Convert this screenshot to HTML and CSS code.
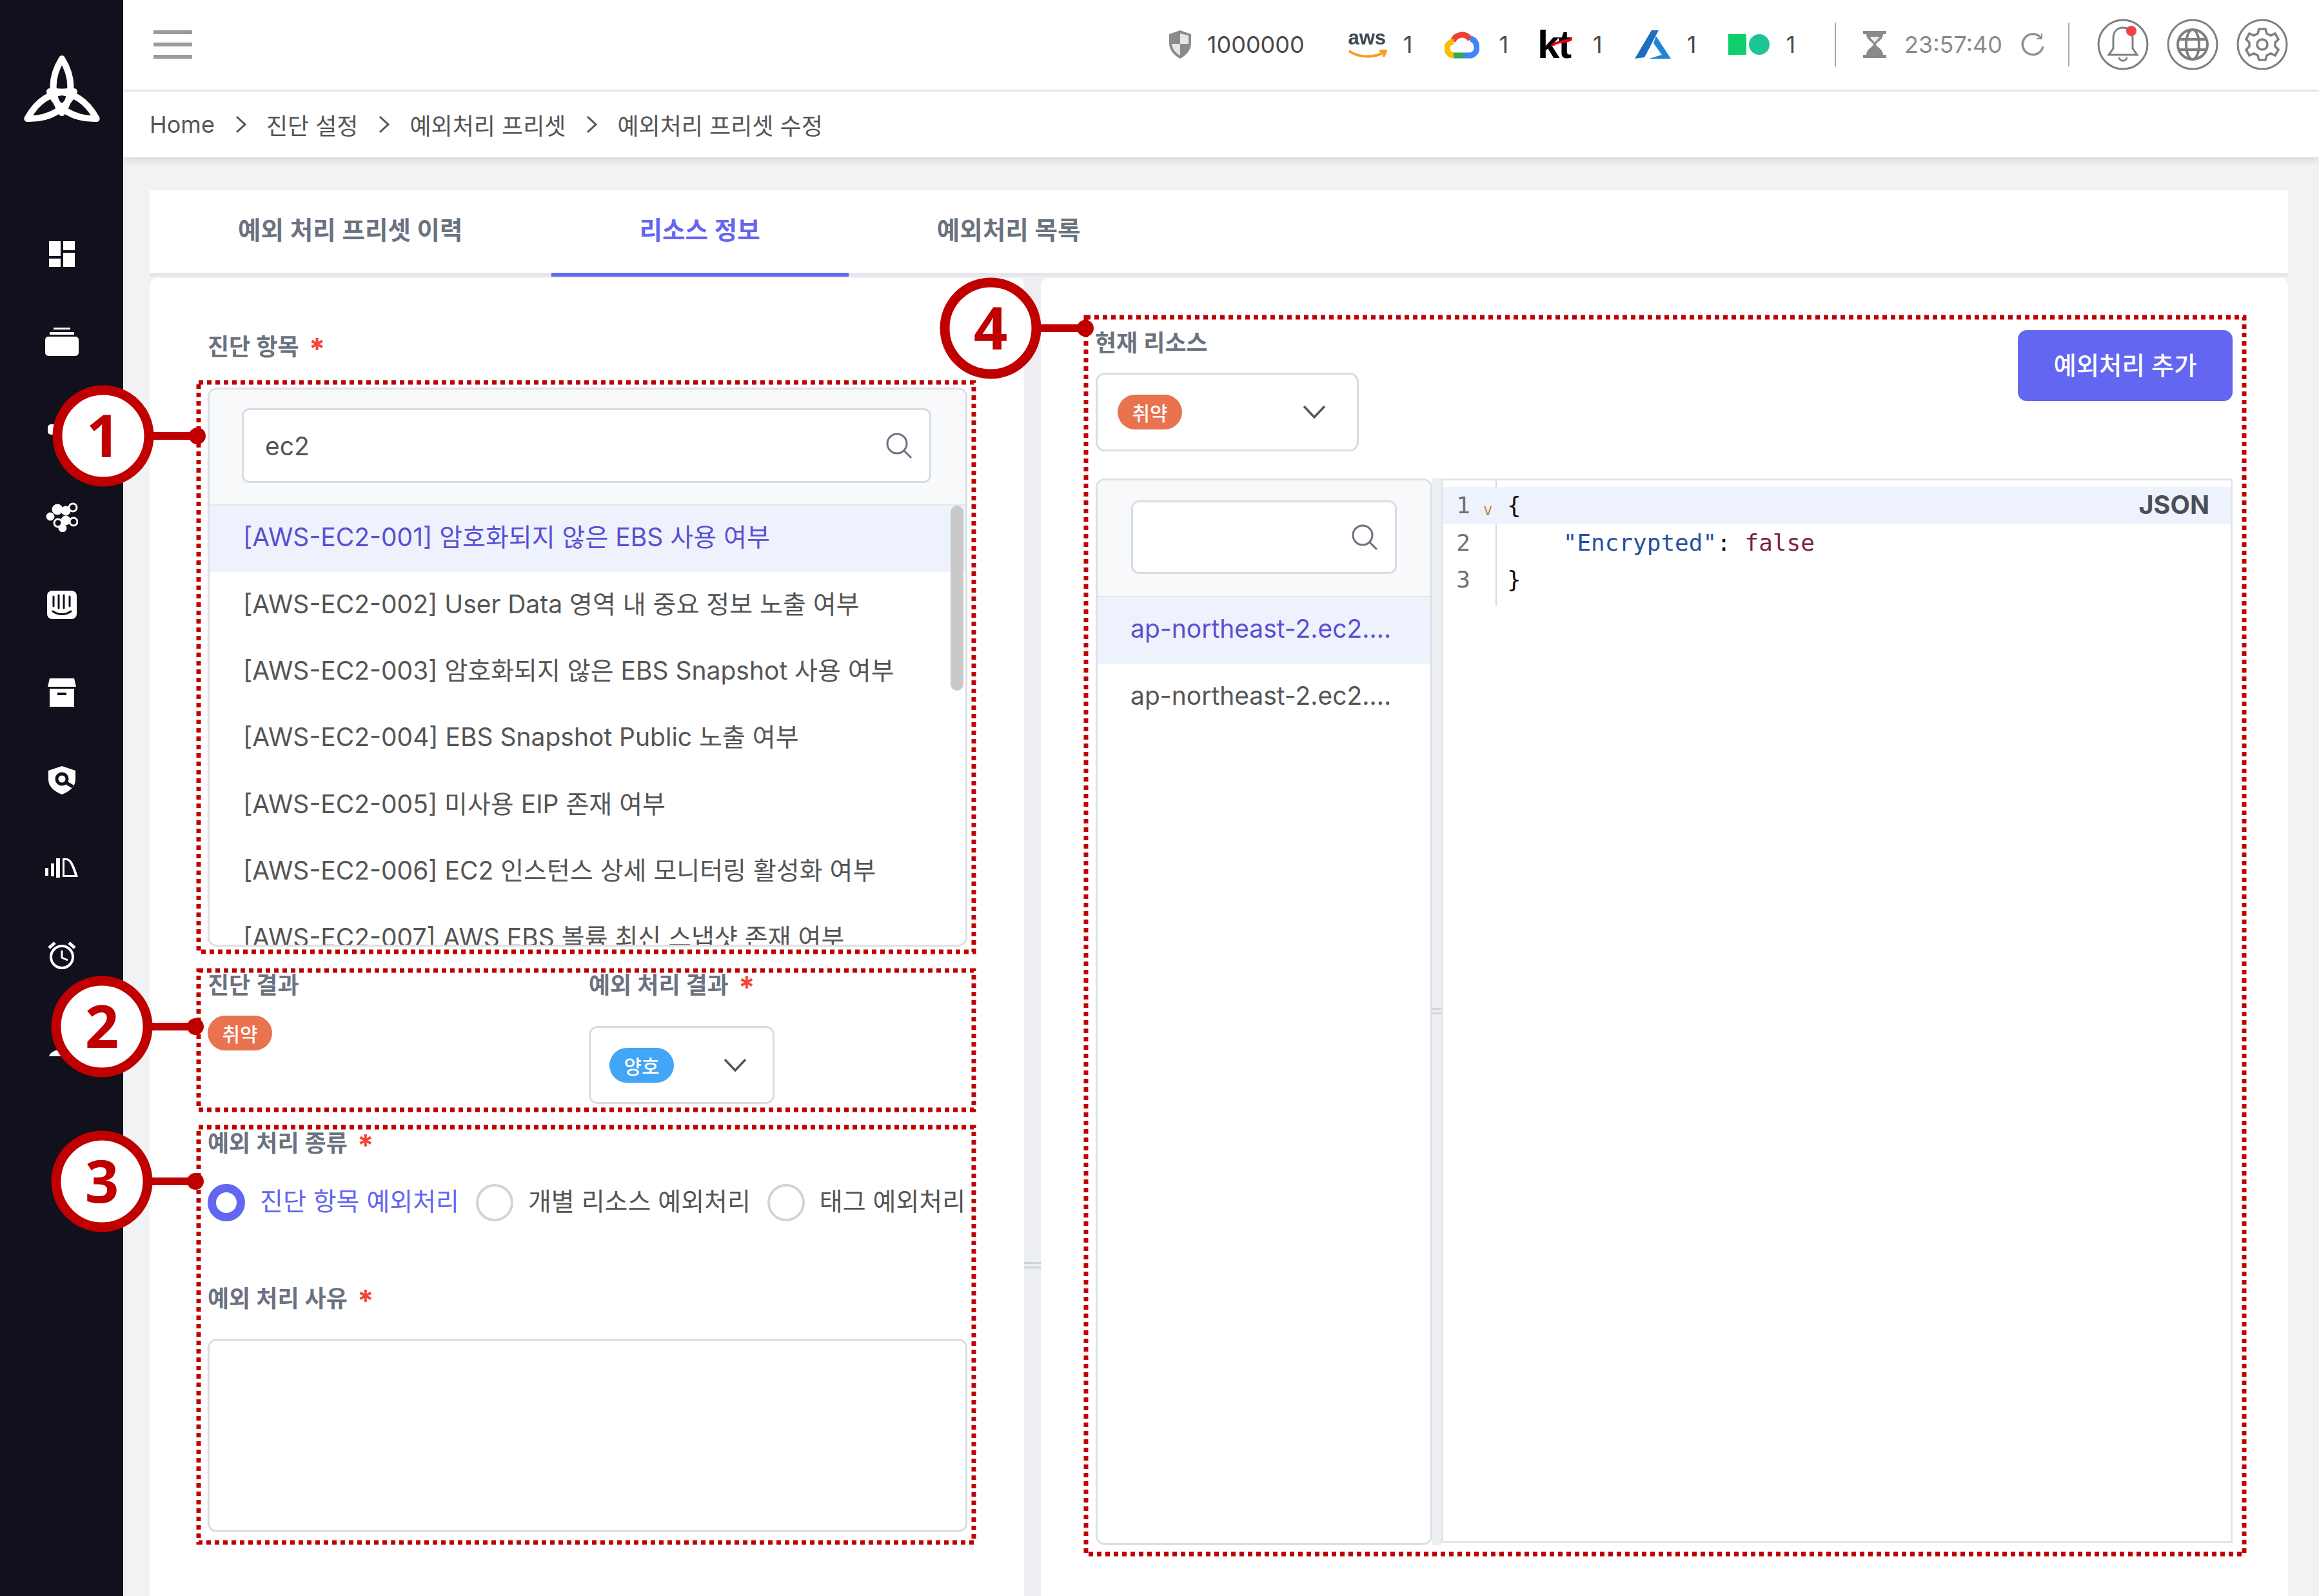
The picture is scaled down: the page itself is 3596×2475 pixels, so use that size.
FILE: index.html
```
<!DOCTYPE html>
<html lang="ko">
<head>
<meta charset="utf-8">
<title>예외처리 프리셋 수정</title>
<link rel="stylesheet" href="styles.css">
</head>
<body>
<div class="app">
  <aside class="sidebar">
    <div class="logo">
      <svg width="130" height="120" viewBox="-65 -68 130 120"><g fill="none" stroke="#fff" stroke-width="10" stroke-linejoin="round"><path d="M0-62C16-36 20-8 0 22C-20-8-16-36 0-62Z"/><path d="M0-62C16-36 20-8 0 22C-20-8-16-36 0-62Z" transform="rotate(120)"/><path d="M0-62C16-36 20-8 0 22C-20-8-16-36 0-62Z" transform="rotate(240)"/></g></svg>
    </div>
    <nav class="side-nav">
      <div class="side-item"><svg width="40" height="40" viewBox="0 0 40 40" fill="#fff"><rect x="0" y="0" width="18" height="23"/><rect x="22" y="0" width="18" height="14"/><rect x="0" y="27" width="18" height="13"/><rect x="22" y="18" width="18" height="22"/></svg></div>
      <div class="side-item"><svg width="52" height="44" viewBox="0 0 52 44" fill="#fff"><rect x="13" y="0" width="26" height="3"/><rect x="7" y="7" width="38" height="4"/><rect x="0" y="14" width="52" height="30" rx="5"/></svg></div>
      <div class="side-item"><svg width="44" height="44" viewBox="0 0 44 44" fill="#fff"><rect x="0" y="14" width="44" height="16" rx="5"/></svg></div>
      <div class="side-item"><svg width="50" height="46" viewBox="0 0 50 46" fill="#fff" stroke="#fff"><circle cx="7" cy="22" r="6"/><circle cx="18" cy="11" r="8"/><circle cx="31" cy="13" r="7"/><circle cx="19" cy="32" r="6" fill="none" stroke-width="3"/><circle cx="42" cy="8" r="6" fill="none" stroke-width="3"/><circle cx="31" cy="28" r="7"/><circle cx="43" cy="30" r="6" fill="none" stroke-width="3"/><circle cx="26" cy="40" r="6"/></svg></div>
      <div class="side-item"><svg width="46" height="44" viewBox="0 0 46 44"><rect width="46" height="44" rx="8" fill="#fff"/><g stroke="#10111c" stroke-width="3" stroke-linecap="round" fill="none"><path d="M10 9V24M18 7V27M26 7V27M35 9V24"/><path d="M9 32C17 38 29 38 37 32"/></g></svg></div>
      <div class="side-item"><svg width="44" height="44" viewBox="0 0 44 44" fill="#fff"><path d="M3 0H41L44 13H0Z"/><path d="M3 16H41V44H3Z"/><rect x="15" y="22" width="14" height="4" fill="#10111c"/></svg></div>
      <div class="side-item"><svg width="42" height="44" viewBox="0 0 42 44"><path d="M21 0L42 7V21C42 32 32 40 21 44C10 40 0 32 0 21V7Z" fill="#fff"/><circle cx="21" cy="20" r="8" fill="none" stroke="#10111c" stroke-width="5"/><path d="M28 26L38 32" stroke="#10111c" stroke-width="5"/></svg></div>
      <div class="side-item"><svg width="52" height="34" viewBox="0 0 52 34" fill="#fff"><rect x="0" y="17" width="5" height="12"/><rect x="9" y="10" width="5" height="20"/><rect x="17" y="2" width="6" height="30"/><path d="M27 2H33C42 2 47 18 51 31H27ZM30 5V28H46C42 16 38 5 33 5Z" fill-rule="evenodd"/></svg></div>
      <div class="side-item"><svg width="44" height="46" viewBox="0 0 44 46" fill="none" stroke="#fff"><circle cx="22" cy="25" r="17" stroke-width="4"/><path d="M22 15V26L31 30" stroke-width="3"/><path d="M2 11L11 3M42 11L33 3" stroke-width="5"/></svg></div>
      <div class="side-item"><svg width="44" height="44" viewBox="0 0 44 44" fill="#fff"><circle cx="22" cy="12" r="10"/><path d="M2 42C6 28 38 28 42 42Z"/></svg></div>
    </nav>
  </aside>

  <div class="main">
    <header class="topbar">
      <button class="burger" aria-label="메뉴"><span></span><span></span><span></span></button>
      <div class="top-right">
        <div class="stat stat-wide"><svg width="34" height="44" viewBox="0 0 34 44"><path d="M17 0L34 6V20C34 31 26 39 17 44C8 39 0 31 0 20V6Z" fill="#8a8a8a"/><path d="M17 5V21H30V8ZM17 21V39C10 35 5 29 4 21Z" fill="#e6e6e6"/></svg><span>1000000</span></div>
        <div class="stat"><div class="aws"><span class="aws-text">aws</span><svg width="62" height="16" viewBox="0 0 62 16"><path d="M3 2C18 13 42 13 57 4M50 2L60 2L56 11" fill="none" stroke="#f59e1b" stroke-width="4"/></svg></div><span>1</span></div>
        <div class="stat stat-gcp"><svg width="54" height="44" viewBox="0 0 54 44" fill="none" stroke-width="9"><path d="M13 17C17 6 32 3 40 14" stroke="#ea4335"/><path d="M40 13C47 14 50 21 50 27C50 33 46 38 40 39H30" stroke="#4285f4"/><path d="M30 39H14" stroke="#34a853"/><path d="M14 39C6 38 3 31 4 26C5 21 9 18 14 18" stroke="#fbbc04"/></svg><span>1</span></div>
        <div class="stat stat-kt"><div class="kt"><span class="kt-text">kt</span><svg class="kt-swoosh" width="34" height="14" viewBox="0 0 34 14"><path d="M0 14C8 4 22 8 34 0V5C24 12 12 8 6 14Z" fill="#e60012"/></svg></div><span>1</span></div>
        <div class="stat"><svg width="56" height="44" viewBox="0 0 56 44"><path d="M26 0H37L15 42L0 44Z" fill="#1a6fc0"/><path d="M33 9L56 44H22L42 38L29 20Z" fill="#1f86d6"/></svg><span>1</span></div>
        <div class="stat"><svg width="64" height="32" viewBox="0 0 64 32"><rect width="28" height="32" fill="#0ed06a"/><circle cx="48" cy="16" r="16" fill="#1fc495"/></svg><span>1</span></div>
        <i class="sep"></i>
        <div class="timer">
          <svg width="36" height="42" viewBox="0 0 36 42" fill="#8a8a8a"><rect width="36" height="5"/><rect y="37" width="36" height="5"/><path d="M5 5H31C31 14 21 17 20 21C21 25 31 28 31 37H5C5 28 15 25 16 21C15 17 5 14 5 5Z"/><path d="M11 9H25C24 13 19 16 18 18C17 16 12 13 11 9Z" fill="#ececec"/></svg>
          <span class="time">23:57:40</span>
          <svg width="38" height="38" viewBox="0 0 38 38" fill="none" stroke="#8f8f8f" stroke-width="3.5"><path d="M32 9A16 16 0 1 0 35 22"/><path d="M33 2V10H25" stroke-width="2"/></svg>
        </div>
        <i class="sep"></i>
        <div class="round-icons">
          <span class="round-icon"><svg width="80" height="80" viewBox="0 0 80 80" fill="none" stroke="#7f7f7f" stroke-width="3"><circle cx="40" cy="40" r="38"/><path d="M40 14C30 14 25 21 25 31V46L18 56H62L55 46V31C55 21 50 14 40 14Z"/><path d="M34 60C35 67 45 67 46 60"/><circle cx="53" cy="19" r="8" fill="#ef4444" stroke="none"/></svg></span>
          <span class="round-icon"><svg width="80" height="80" viewBox="0 0 80 80" fill="none" stroke="#7f7f7f" stroke-width="3"><circle cx="40" cy="40" r="38"/><circle cx="40" cy="40" r="23" stroke-width="4"/><ellipse cx="40" cy="40" rx="10" ry="23" stroke-width="4"/><path d="M18 32H62M18 48H62" stroke-width="4"/></svg></span>
          <span class="round-icon"><svg width="80" height="80" viewBox="0 0 80 80" fill="none" stroke="#7f7f7f" stroke-width="3"><circle cx="40" cy="40" r="38"/><path d="M35 16H45L47 23L53 26L60 23L65 32L60 37V43L65 48L60 57L53 54L47 57L45 64H35L33 57L27 54L20 57L15 48L20 43V37L15 32L20 23L27 26L33 23Z" stroke-width="3.5"/><circle cx="40" cy="40" r="8" stroke-width="3.5"/></svg></span>
        </div>
      </div>
    </header>

    <nav class="crumbs">
      <span>Home</span><svg class="crumb-sep" width="20" height="30" viewBox="0 0 20 30"><path d="M3 3L16 15L3 27" fill="none" stroke="#555" stroke-width="3"/></svg>
      <span>진단 설정</span><svg class="crumb-sep" width="20" height="30" viewBox="0 0 20 30"><path d="M3 3L16 15L3 27" fill="none" stroke="#555" stroke-width="3"/></svg>
      <span>예외처리 프리셋</span><svg class="crumb-sep" width="20" height="30" viewBox="0 0 20 30"><path d="M3 3L16 15L3 27" fill="none" stroke="#555" stroke-width="3"/></svg>
      <span>예외처리 프리셋 수정</span>
    </nav>

    <main class="content">
      <div class="tabs">
        <div class="tab">예외 처리 프리셋 이력</div>
        <div class="tab tab-active">리소스 정보</div>
        <div class="tab">예외처리 목록</div>
      </div>
      <div class="panels">
        <section class="panel panel-left">
          <div class="label">진단 항목 <b class="req">*</b></div>
          <div class="listbox">
            <div class="list-search">
              <div class="input"><span class="input-text">ec2</span><svg width="42" height="42" viewBox="0 0 42 42" fill="none" stroke="#6b7280" stroke-width="3"><circle cx="18" cy="18" r="15"/><path d="M29 29L40 40"/></svg></div>
            </div>
            <div class="rows">
              <div class="row row-active">[AWS-EC2-001] 암호화되지 않은 EBS 사용 여부</div>
              <div class="row">[AWS-EC2-002] User Data 영역 내 중요 정보 노출 여부</div>
              <div class="row">[AWS-EC2-003] 암호화되지 않은 EBS Snapshot 사용 여부</div>
              <div class="row">[AWS-EC2-004] EBS Snapshot Public 노출 여부</div>
              <div class="row">[AWS-EC2-005] 미사용 EIP 존재 여부</div>
              <div class="row">[AWS-EC2-006] EC2 인스턴스 상세 모니터링 활성화 여부</div>
              <div class="row">[AWS-EC2-007] AWS EBS 볼륨 최신 스냅샷 존재 여부</div>
              <div class="scroll-thumb"></div>
            </div>
          </div>
          <div class="result-row">
            <div class="result-col">
              <div class="label">진단 결과</div>
              <span class="badge badge-bad badge-result">취약</span>
            </div>
            <div class="result-col">
              <div class="label">예외 처리 결과 <b class="req">*</b></div>
              <div class="select select-small"><span class="badge badge-good">양호</span><svg width="36" height="22" viewBox="0 0 36 22" fill="none" stroke="#555" stroke-width="3.5"><path d="M2 2L18 19L34 2"/></svg></div>
            </div>
          </div>
          <div class="label label-kind">예외 처리 종류 <b class="req">*</b></div>
          <div class="radios">
            <label class="radio radio-on"><i class="dot"></i>진단 항목 예외처리</label>
            <label class="radio"><i class="dot"></i>개별 리소스 예외처리</label>
            <label class="radio"><i class="dot"></i>태그 예외처리</label>
          </div>
          <div class="label label-reason">예외 처리 사유 <b class="req">*</b></div>
          <div class="textarea"></div>
        </section>

        <div class="splitter"><i></i></div>

        <section class="panel panel-right">
          <div class="res-head">
            <div>
              <div class="label label-res">현재 리소스</div>
              <div class="select select-big"><span class="badge badge-bad">취약</span><svg width="36" height="22" viewBox="0 0 36 22" fill="none" stroke="#555" stroke-width="3.5"><path d="M2 2L18 19L34 2"/></svg></div>
            </div>
            <button class="btn-add">예외처리 추가</button>
          </div>
          <div class="workspace">
            <div class="res-list">
              <div class="res-search">
                <div class="input input-res"><svg width="42" height="42" viewBox="0 0 42 42" fill="none" stroke="#6b7280" stroke-width="3"><circle cx="18" cy="18" r="15"/><path d="M29 29L40 40"/></svg></div>
              </div>
              <div class="res-row res-row-active"><span>ap-northeast-2.ec2....</span></div>
              <div class="res-row"><span>ap-northeast-2.ec2....</span></div>
            </div>
            <div class="vsplit"><i></i></div>
            <div class="editor">
              <div class="editor-lines">
                <div class="line line-active"><span class="ln">1</span><span class="fold">v</span><span class="code">{</span><span class="json-tag">JSON</span></div>
                <div class="line"><span class="ln">2</span><span class="fold"></span><span class="code">    <span class="k">"Encrypted"</span>: <span class="v">false</span></span></div>
                <div class="line"><span class="ln">3</span><span class="fold"></span><span class="code">}</span></div>
              </div>
            </div>
          </div>
        </section>
      </div>
    </main>
  </div>

  <svg class="annotations" width="3596" height="2475" viewBox="0 0 3596 2475">
    <g class="ann-box">
      <rect x="308" y="593" width="1202" height="883"/>
      <rect x="308" y="1505" width="1202" height="216"/>
      <rect x="308" y="1748" width="1202" height="644"/>
      <rect x="1684" y="492" width="1796" height="1918"/>
    </g>
    <g class="ann-line">
      <path d="M232 676H306"/><path d="M232 1592H303"/><path d="M232 1832H303"/><path d="M1608 509H1683"/>
    </g>
    <g class="ann-dot">
      <circle cx="306" cy="676" r="13"/><circle cx="303" cy="1592" r="13"/><circle cx="303" cy="1832" r="13"/><circle cx="1683" cy="509" r="13"/>
    </g>
    <g class="ann-circle">
      <circle cx="160" cy="676" r="71"/><circle cx="158" cy="1592" r="71"/><circle cx="158" cy="1832" r="71"/><circle cx="1536" cy="509" r="71"/>
    </g>
    <g class="ann-num">
      <text x="160" y="709">1</text><text x="158" y="1625">2</text><text x="158" y="1865">3</text><text x="1536" y="542">4</text>
    </g>
  </svg>
</div>
</body>
</html>
```
FILE: styles.css
```
* { box-sizing: border-box; }
html, body { margin: 0; padding: 0; }
body {
  width: 3596px; height: 2475px; overflow: hidden; background: #f1f2f3;
  font-family: "Inter", "Noto Sans CJK KR", sans-serif; color: #4b5563; font-size: 39px;
}
.app { position: relative; display: flex; width: 3596px; height: 2475px; overflow: hidden; }

.sidebar { flex: 0 0 191px; background: #10111c; display: flex; flex-direction: column; align-items: center; }
.logo { height: 326px; padding-top: 85px; }
.side-nav { display: flex; flex-direction: column; }
.side-item { height: 136px; display: flex; align-items: center; justify-content: center; }

.main { flex: 1; min-width: 0; display: flex; flex-direction: column; }
.topbar { height: 142px; background: #fff; border-bottom: 3px solid #e8eaf2; display: flex; align-items: center; justify-content: space-between; padding: 0 48px 2px 47px; }
.burger { width: 60px; height: 44px; padding: 0; border: 0; background: none; display: flex; flex-direction: column; justify-content: space-between; }
.burger span { display: block; height: 6px; background: #9a9a9a; }
.top-right { display: flex; align-items: center; }
.stat { display: flex; align-items: center; gap: 25px; margin-right: 50px; font-size: 36px; color: #4a4a4a; }
.stat-wide { margin-right: 66px; }
.stat-gcp { gap: 30px; margin-right: 45px; }
.stat-kt { gap: 27px; }
.aws { position: relative; width: 62px; height: 44px; }
.aws-text { position: absolute; left: 0; right: 0; top: -8px; text-align: center; font: 700 31px/40px "Liberation Sans", sans-serif; color: #3d4654; }
.aws svg { position: absolute; left: 0; bottom: -2px; }
.kt { position: relative; width: 59px; height: 44px; }
.kt-text { font: 700 62px/44px "Liberation Sans", sans-serif; color: #000; letter-spacing: -2px; }
.kt-swoosh { position: absolute; left: 20px; top: 10px; }
.sep { width: 2px; height: 68px; background: #a8a8a8; margin: 0 42px 0 11px; }
.timer { display: flex; align-items: center; }
.time { color: #8a8a8a; font-size: 36px; margin: 0 28px; }
.timer + .sep { margin: 0 43px 0 36px; }
.round-icons { display: flex; gap: 28px; }
.round-icon { display: block; height: 80px; }

.crumbs { height: 102px; background: #fff; display: flex; align-items: center; padding: 0 0 0 41px; font-size: 36px; color: #555; box-shadow: 0 4px 12px rgba(0,0,0,.12); position: relative; }
.crumb-sep { margin: 0 29px 0 31px; }

.content { flex: 1; min-height: 0; padding: 51px 48px 0 41px; display: flex; flex-direction: column; }
.tabs { display: flex; height: 134px; background: #fff; border-bottom: 6px solid #e5e7eb; }
.tab { padding: 0 137px 10px; font-size: 38.6px; font-weight: 600; color: #6b7280; display: flex; align-items: center; margin-bottom: -6px; border-bottom: 6px solid transparent; white-space: nowrap; }
.tab-active { color: #6366f1; border-bottom-color: #6366f1; }
.panels { flex: 1; min-height: 0; display: flex; margin-top: 2px; }
.panel { background: #fff; border-radius: 12px 12px 0 0; min-width: 0; }
.panel-left { flex: 0 0 1356px; padding: 85px 90px 0; }
.panel-right { flex: 1; padding: 79px 86px 0 85px; }
.splitter { flex: 0 0 26px; background: #eceef1; }
.splitter i, .vsplit i { display: block; width: 100%; height: 10px; border-top: 3px solid #d0d3d9; border-bottom: 3px solid #d0d3d9; }
.splitter i { margin-top: 1526px; }

.label { font-size: 36px; line-height: 44px; height: 44px; font-weight: 600; color: #6b7280; white-space: nowrap; }
.req { color: #f44336; font-weight: 700; margin-left: 6px; font-size: 46px; line-height: 0; vertical-align: -7px; }

.listbox { margin: 41px -2px 0 0; height: 867px; border: 3px solid #dcdfe6; border-radius: 14px; overflow: hidden; display: flex; flex-direction: column; background: #fff; }
.list-search { height: 180px; background: #f8f9fb; padding: 29px 53px 0 50px; border-bottom: 2px solid #e5e7eb; }
.input { height: 116px; background: #fff; border: 3px solid #d8dce3; border-radius: 12px; display: flex; align-items: center; justify-content: space-between; padding: 0 26px 0 33px; }
.input-text { font-size: 39px; color: #555; }
.rows { position: relative; flex: 1; overflow: hidden; }
.row { height: 103.4px; padding: 0 0 11px 52px; display: flex; align-items: center; font-size: 39px; color: #555; white-space: nowrap; }
.row-active { background: #eef2fd; color: #5a4fd1; }
.scroll-thumb { position: absolute; right: 3px; top: 0; width: 20px; height: 287px; border-radius: 10px; background: #c9c9c9; }

.result-row { display: flex; margin-top: 38px; }
.result-col { flex: 0 0 591px; }
.badge { display: inline-flex; align-items: center; justify-content: center; width: 100px; height: 54px; border-radius: 27px; font-size: 30px; font-weight: 500; color: #fff; }
.badge-bad { background: #e9724f; }
.badge-good { background: #42a5f5; }
.badge-result { margin-top: 25px; }
.select { background: #fff; border: 3px solid #d8dce3; border-radius: 14px; display: flex; align-items: center; justify-content: space-between; }
.select-small { width: 288px; height: 121px; margin-top: 41px; padding: 0 40px 0 29px; }
.select-big { width: 408px; height: 122px; margin-top: 24px; padding: 0 48px 0 31px; }

.label-kind { margin-top: 39px; }
.radios { display: flex; margin-top: 38px; height: 60px; align-items: center; white-space: nowrap; font-size: 39px; color: #555; }
.radio { display: flex; align-items: center; margin-right: 26px; line-height: 56px; }
.dot { width: 58px; height: 58px; border-radius: 50%; border: 4px solid #cfd3da; margin: 4px 23px 0 0; flex: none; }
.radio-on { color: #6366f1; }
.radio-on .dot { border: 13px solid #6366f1; }
.label-reason { margin-top: 99px; }
.textarea { margin: 40px -2px 0 0; height: 300px; border: 3px solid #d8dce3; border-radius: 14px; }

.res-head { display: flex; justify-content: space-between; align-items: flex-start; height: 232px; }
.label-res { font-size: 36px; margin-left: -1px; }
.btn-add { margin-top: 2px; width: 333px; height: 110px; padding: 0 0 6px; border: 0; border-radius: 14px; background: #6366f1; color: #fff; font: 500 38.4px "Inter", "Noto Sans CJK KR", sans-serif; }
.workspace { display: flex; height: 1654px; }
.res-list { flex: 0 0 522px; border: 3px solid #dcdfe6; border-radius: 14px; background: #fff; overflow: hidden; }
.res-search { height: 181px; background: #f8f9fb; padding: 31px 52px 0 52px; border-bottom: 2px solid #e5e7eb; }
.input-res { height: 114px; padding: 0 26px 0 14px; justify-content: flex-end; }
.res-row { height: 104px; display: flex; align-items: center; padding: 0 0 8px 51px; font-size: 39px; color: #555; white-space: nowrap; }
.res-row-active { background: #eef2fd; color: #5a4fd1; }
.vsplit { flex: 0 0 14px; background: #eceef1; }
.vsplit i { margin-top: 821px; }
.editor { flex: 1; min-width: 0; height: 1651px; border: 3px solid #e3e5e8; padding-top: 10px; }
.editor-lines { position: relative; font: 36px/57.5px "DejaVu Sans Mono", monospace; color: #111; }
.editor-lines::before { content: ""; position: absolute; left: 81px; top: -10px; height: 194px; width: 2px; background: #d8d8d8; }
.line { display: flex; height: 57.5px; position: relative; }
.line-active { background: #eef2fd; }
.ln { width: 62px; text-align: center; color: #6f6f6f; }
.fold { width: 37px; font-size: 24px; color: #c08a4a; line-height: 72px; text-align: left; }
.code { white-space: pre; }
.k { color: #2451a0; }
.v { color: #811f3f; }
.json-tag { position: absolute; right: 33px; top: 0; font: 700 39.5px/57.5px "Inter", sans-serif; color: #4b4f55; }

.annotations { position: absolute; left: 0; top: 0; pointer-events: none; }
.ann-box rect { fill: none; stroke: #c00000; stroke-width: 7; stroke-dasharray: 7 6; }
.ann-line path { fill: none; stroke: #c00000; stroke-width: 12; }
.ann-dot circle { fill: #c00000; }
.ann-circle circle { fill: #fff; stroke: #c00000; stroke-width: 15; }
.ann-num text { font: 700 92px "Open Sans", sans-serif; fill: #c00000; text-anchor: middle; }
```
